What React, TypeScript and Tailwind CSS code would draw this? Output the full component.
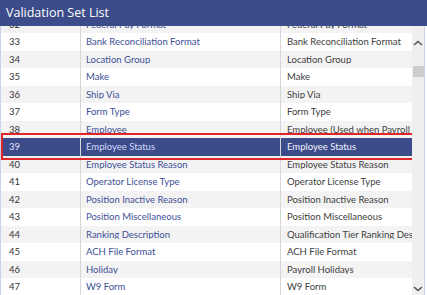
import React from "react";

const rows: [string, string, string][] = [
  ["32", "Federal Pay Format", "Federal Pay Format"],
  ["33", "Bank Reconciliation Format", "Bank Reconciliation Format"],
  ["34", "Location Group", "Location Group"],
  ["35", "Make", "Make"],
  ["36", "Ship Via", "Ship Via"],
  ["37", "Form Type", "Form Type"],
  ["38", "Employee", "Employee (Used when Payroll is not installed)"],
  ["39", "Employee Status", "Employee Status"],
  ["40", "Employee Status Reason", "Employee Status Reason"],
  ["41", "Operator License Type", "Operator License Type"],
  ["42", "Position Inactive Reason", "Position Inactive Reason"],
  ["43", "Position Miscellaneous", "Position Miscellaneous"],
  ["44", "Ranking Description", "Qualification Tier Ranking Description"],
  ["45", "ACH File Format", "ACH File Format"],
  ["46", "Holiday", "Payroll Holidays"],
  ["47", "W9 Form", "W9 Form"],
];

const SELECTED = "39";

function Row({ num, name, desc, index }: { num: string; name: string; desc: string; index: number }) {
  const selected = num === SELECTED;
  const bg = selected ? "bg-[#3c4b89]" : index % 2 === 0 ? "bg-[#f3f3f3]" : "bg-white";
  return (
    <div className={`relative flex h-[17.5px] items-center text-[9.5px] leading-none ${bg}`}>
      <div className={`w-[79px] shrink-0 pl-[8px] ${selected ? "text-[#e4e9ff]" : "text-[#333]"}`}>{num}</div>
      <div className="h-full w-px shrink-0 bg-[#d6d6d6]" />
      <div className={`w-[199px] shrink-0 overflow-hidden whitespace-nowrap pl-[5px] ${selected ? "text-[#d3dcff]" : "text-[#3d4f96]"}`}>
        {name}
      </div>
      <div className="h-full w-px shrink-0 bg-[#d6d6d6]" />
      <div className={`min-w-0 flex-1 overflow-hidden whitespace-nowrap pl-[6px] ${selected ? "text-[#f2f4ff]" : "text-[#404040]"}`}>
        {desc}
      </div>
    </div>
  );
}

export default function App() {
  return (
    <div className="flex h-[295px] w-[427px] flex-col overflow-hidden bg-white font-['Lato',sans-serif]">
      <div className="flex h-[26px] shrink-0 items-center bg-[#3c4b89] pl-[6px] font-['Open_Sans',sans-serif] text-[12.5px] text-white">
        Validation Set List
      </div>
      <div className="flex min-h-0 flex-1 border-l border-[#c9d3e8]">
        <div className="relative min-h-0 w-[411px] overflow-hidden">
          <div className="-mt-[10.5px]">
            {rows.map((r, i) => (
              <Row key={r[0]} num={r[0]} name={r[1]} desc={r[2]} index={i} />
            ))}
          </div>
          <div className="pointer-events-none absolute left-0 right-[-4px] top-[107px] h-[27px] border-2 border-[#e0262b]" />
        </div>
        <div className="flex w-[12px] shrink-0 flex-col items-center bg-[#efefef]">
          <svg width="10" height="6" viewBox="0 0 10 6" className="mt-[14px]">
            <path d="M1 5 L5 1.5 L9 5" fill="none" stroke="#555" strokeWidth="1.6" />
          </svg>
          <div className="mt-[20px] h-[11px] w-[11px] bg-[#cdcdcd]" />
          <div className="flex-1" />
          <svg width="10" height="6" viewBox="0 0 10 6" className="mb-[3px]">
            <path d="M1 1 L5 4.5 L9 1" fill="none" stroke="#555" strokeWidth="1.6" />
          </svg>
        </div>
        <div className="w-[3px] shrink-0 border-l border-[#c9d3e8] bg-white" />
      </div>
    </div>
  );
}
